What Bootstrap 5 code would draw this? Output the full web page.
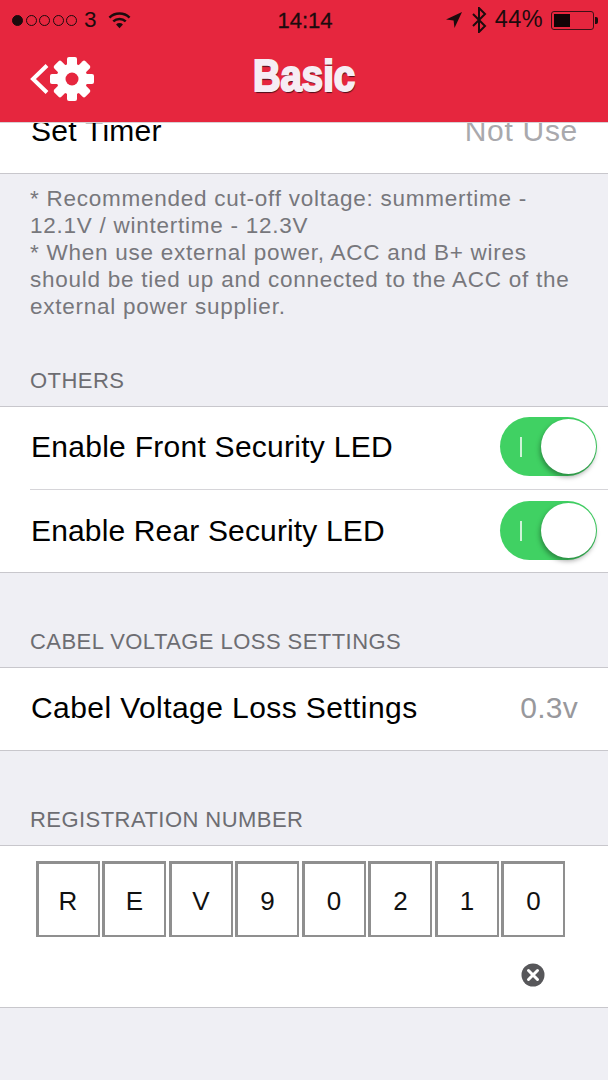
<!DOCTYPE html>
<html lang="en">
<head>
    <meta charset="UTF-8">
    <meta name="viewport" content="width=device-width, initial-scale=1.0">
    <title>Basic</title>
    <link href="https://cdn.jsdelivr.net/npm/bootstrap@5.3.0/dist/css/bootstrap.min.css" rel="stylesheet">
    <style>
        html, body { height: 1080px; overflow: hidden; }
        body {
            background: #efeff4;
            font-family: "Liberation Sans", Arial, sans-serif;
            color: #000;
        }
        .top-bar { background: #e6263e; height: 123px; border-bottom: 1px solid #d8d0d4; }
        .status-row { height: 40px; color: #1c0b0d; font-size: 23px; padding: 0 10px 0 12px; }
        .status-side { flex: 1 1 0; }
        .sig-dots { gap: 2.5px; margin-right: 7px; }
        .sig-dot { width: 11px; height: 11px; border-radius: 50%; border: 1px solid #1c0b0d; }
        .sig-dot.on { background: #1c0b0d; }
        .sig-num { margin-right: 11px; font-size: 22.5px; }
        .clock { font-weight: 500; font-size: 22px; -webkit-text-stroke: .3px #1c0b0d; }
        .batt-pct { font-size: 23.5px; letter-spacing: .4px; margin-right: 8px; }
        .batt { width: 43px; height: 19px; border: 1px solid #3f1016; border-radius: 3px; padding: 2px; }
        .batt-fill { background: #100406; height: 100%; width: 16px; }
        .batt-nub { width: 3px; height: 7px; background: #1c0b0d; border-radius: 0 2px 2px 0; margin-left: 1px; }
        .nav-row { height: 82px; padding-bottom: 10px; }
        .nav-back { width: 200px; padding-left: 30px; margin-top: 5px; }
        .nav-title {
            font-family: "Liberation Sans", sans-serif;
            font-weight: 700;
            font-size: 44px;
            color: #f6edf4;
            -webkit-text-stroke: 2.2px #f6edf4;
            text-shadow: 1px 2px 1px #4a0f1a;
            line-height: 1;
            transform: scaleX(.87);
        }
        .page-body { padding-top: 90px; }
        .cell-group { background: #fff; border-top: 1px solid #c8c7cc; border-bottom: 1px solid #c8c7cc; }
        .cell-line { height: 82px; font-size: 30px; letter-spacing: .27px; padding: 0 30px 3px 31px; }
        .cell-line + .cell-line { position: relative; height: 83px; padding-bottom: 0; letter-spacing: .15px; }
        .cell-line + .cell-line::before {
            content: ""; position: absolute; left: 30px; right: 0; top: 0;
            border-top: 1px solid #d6d5d9;
        }
        .cell-wide { letter-spacing: .42px; }
        .cell-value { color: #98989c; }
        .cell-value.pale { color: #a9a9ad; letter-spacing: .7px; }
        .foot-note { color: #77777c; font-size: 22.5px; line-height: 27px; padding: 11px 30px 0; height: 186px; letter-spacing: .75px; }
        .sect-title { color: #6d6d72; font-size: 22px; padding: 0 0 6px 30px; height: 46px; letter-spacing: .45px; }
        .gap-a { height: 48px; }
        .mini-switch { width: 97px; height: 59px; border-radius: 30px; background: #40d163; position: relative; margin-right: -19px; }
        .mini-switch::before { content: ""; position: absolute; left: 20px; top: 20px; width: 2px; height: 20px; background: rgba(255,255,255,.75); }
        .mini-knob {
            position: absolute; right: 1px; top: 2px; width: 55px; height: 55px; border-radius: 50%;
            background: #fff; box-shadow: -1px 3px 5px rgba(0,0,0,.35);
        }
        .plate-cell { height: 161px; padding: 15px 0 0 35.5px; }
        .plate-row { gap: 2.5px; }
        .plate-box {
            width: 64px; height: 76px; border: 3px solid #8f8f8f; border-right-width: 2px; border-bottom-width: 2px;
            font-size: 26px; color: #111; padding-top: 3px;
        }
        .plate-clear { width: 24px; height: 24px; margin: 26px 0 0 485.5px; display: block; }
    </style>
</head>
<body>
    <div class="top-bar fixed-top">
        <div class="status-row d-flex align-items-center">
            <div class="status-side d-flex align-items-center">
                <div class="sig-dots d-flex">
                    <span class="sig-dot on"></span><span class="sig-dot"></span><span class="sig-dot"></span><span class="sig-dot"></span><span class="sig-dot"></span>
                </div>
                <span class="sig-num">3</span>
                <svg width="23" height="18" viewBox="0 0 24 18" fill="none" stroke="#1c0b0d" stroke-width="2.6">
                    <path d="M1.5 6.5a15 15 0 0 1 21 0"/>
                    <path d="M5.5 10.5a9.5 9.5 0 0 1 13 0"/>
                    <path d="M12 17.5l-3.6-3.8a5 5 0 0 1 7.2 0z" fill="#1c0b0d" stroke="none"/>
                </svg>
            </div>
            <span class="clock">14:14</span>
            <div class="status-side d-flex align-items-center justify-content-end">
                <svg class="me-2" width="18" height="18" viewBox="0 0 18 18"><path d="M17 1L1 8.5l7.6.9.9 7.6z" fill="#1c0b0d"/></svg>
                <svg class="me-2" width="16" height="26" viewBox="0 0 16 26" fill="none" stroke="#1c0b0d" stroke-width="2"><path d="M2 7l12 12-6 6V1l6 6L2 19"/></svg>
                <span class="batt-pct">44%</span>
                <div class="batt"><div class="batt-fill"></div></div>
                <span class="batt-nub"></span>
            </div>
        </div>
        <div class="nav-row d-flex align-items-center position-relative">
            <div class="nav-back d-flex align-items-center">
                <svg width="66" height="46" viewBox="0 0 66 46">
                    <path d="M17 9.5L3 23l14 13.500" fill="none" stroke="#fff" stroke-width="4"/>
                    <g fill="#fff" transform="translate(42 23)">
                        <circle r="15.500"/>
                        <rect x="-5" y="-22" width="10" height="44" rx="2"/>
                        <rect x="-5" y="-22" width="10" height="44" rx="2" transform="rotate(45)"/>
                        <rect x="-5" y="-22" width="10" height="44" rx="2" transform="rotate(90)"/>
                        <rect x="-5" y="-22" width="10" height="44" rx="2" transform="rotate(135)"/>
                    </g>
                    <circle cx="42" cy="23" r="6.500" fill="#e6263e"/>
                </svg>
            </div>
            <div class="position-absolute start-50 translate-middle-x"><div class="nav-title">Basic</div></div>
        </div>
    </div>

    <div class="page-body">
        <div class="cell-group">
            <div class="cell-line d-flex align-items-center justify-content-between">
                <span>Set Timer</span><span class="cell-value pale">Not Use</span>
            </div>
        </div>
        <div class="foot-note">
            * Recommended cut-off voltage: summertime -<br>
            12.1V / wintertime - 12.3V<br>
            * When use external power, ACC and B+ wires<br>
            should be tied up and connected to the ACC of the<br>
            external power supplier.
        </div>

        <div class="sect-title d-flex align-items-center">OTHERS</div>
        <div class="cell-group">
            <div class="cell-line d-flex align-items-center justify-content-between">
                <span>Enable Front Security LED</span>
                <span class="mini-switch"><span class="mini-knob"></span></span>
            </div>
            <div class="cell-line d-flex align-items-center justify-content-between">
                <span>Enable Rear Security LED</span>
                <span class="mini-switch"><span class="mini-knob"></span></span>
            </div>
        </div>

        <div class="gap-a"></div>
        <div class="sect-title d-flex align-items-center">CABEL VOLTAGE LOSS SETTINGS</div>
        <div class="cell-group">
            <div class="cell-line d-flex align-items-center justify-content-between">
                <span class="cell-wide">Cabel Voltage Loss Settings</span><span class="cell-value">0.3v</span>
            </div>
        </div>

        <div class="gap-a"></div>
        <div class="sect-title d-flex align-items-center">REGISTRATION NUMBER</div>
        <div class="cell-group">
            <div class="plate-cell">
                <div class="plate-row d-flex">
                    <div class="plate-box d-flex align-items-center justify-content-center">R</div>
                    <div class="plate-box d-flex align-items-center justify-content-center">E</div>
                    <div class="plate-box d-flex align-items-center justify-content-center">V</div>
                    <div class="plate-box d-flex align-items-center justify-content-center">9</div>
                    <div class="plate-box d-flex align-items-center justify-content-center">0</div>
                    <div class="plate-box d-flex align-items-center justify-content-center">2</div>
                    <div class="plate-box d-flex align-items-center justify-content-center">1</div>
                    <div class="plate-box d-flex align-items-center justify-content-center">0</div>
                </div>
                <svg class="plate-clear" viewBox="0 0 24 24">
                    <circle cx="12" cy="12" r="11.500" fill="#57575a"/>
                    <path d="M7.500 7.500l9 9M16.500 7.500l-9 9" stroke="#fff" stroke-width="3" stroke-linecap="round"/>
                </svg>
            </div>
        </div>
    </div>

    <script src="https://cdn.jsdelivr.net/npm/bootstrap@5.3.0/dist/js/bootstrap.bundle.min.js"></script>
</body>
</html>
